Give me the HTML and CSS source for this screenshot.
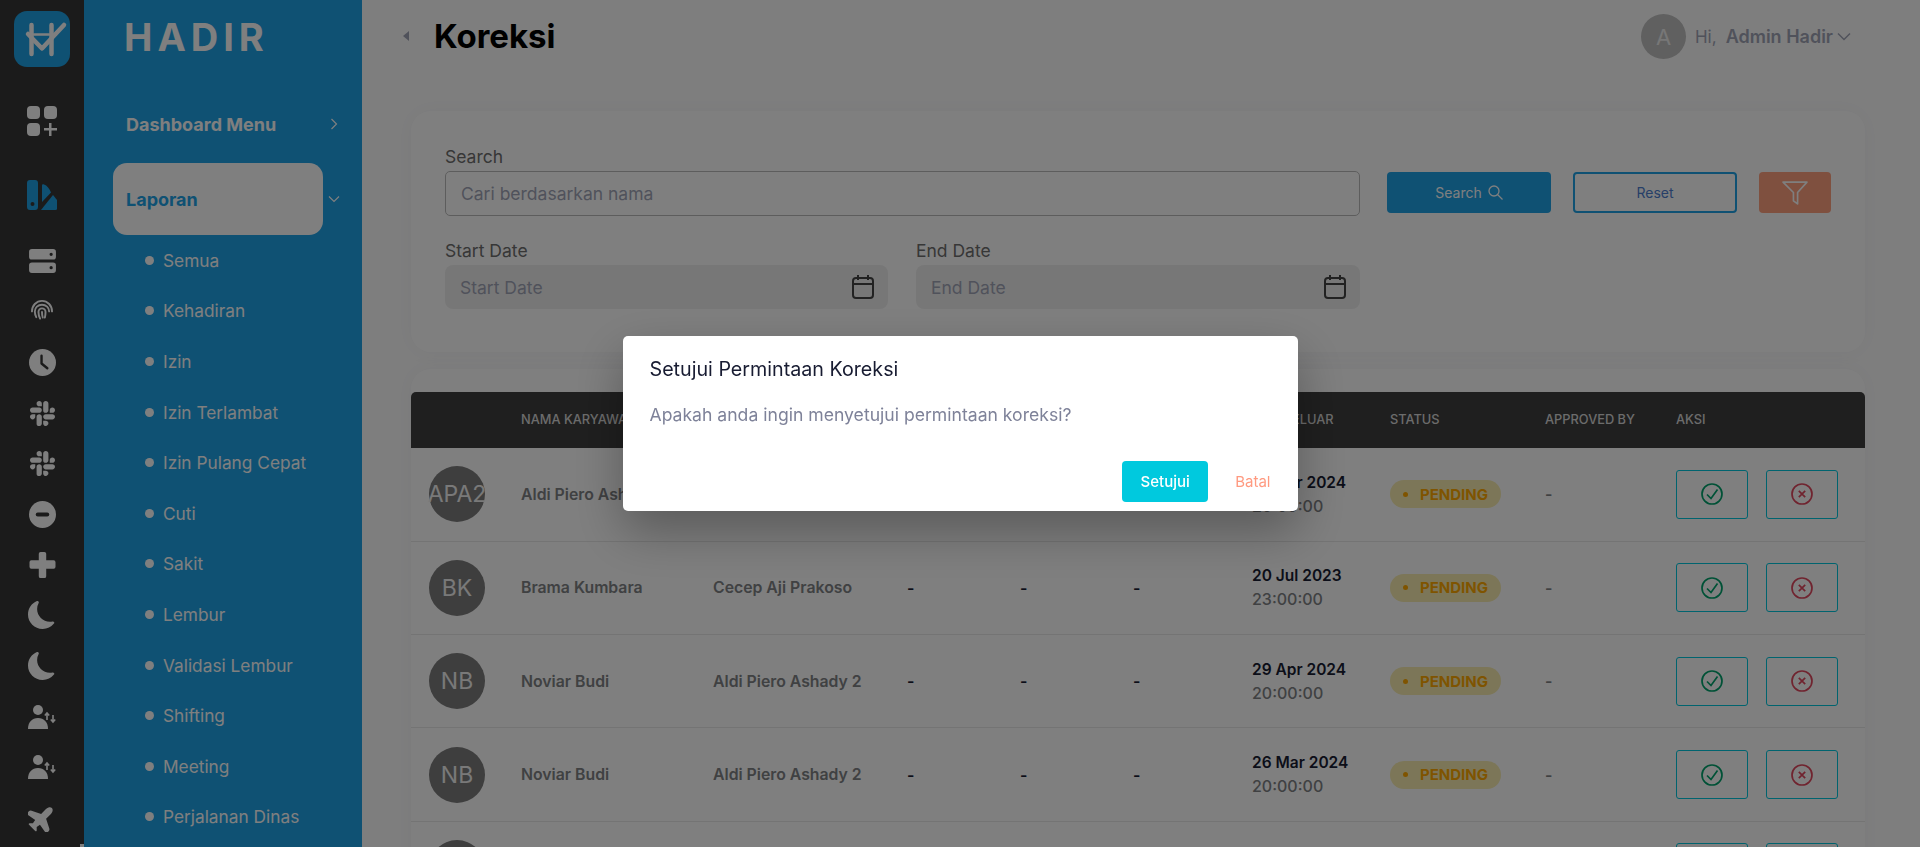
FILE: index.html
```html
<!DOCTYPE html>
<html lang="id">
<head>
  <meta charset="UTF-8">
  <title>Koreksi</title>
  <link rel="stylesheet" href="styles.css">
</head>
<body>

  <div class="rail">
    <div class="rail-logo">
      <svg width="56" height="56" viewBox="0 0 56 56" fill="none" stroke="#fff" stroke-linecap="round" stroke-linejoin="round">
        <path d="M17.500 14v29M37.500 14v29" stroke-width="4.500"/>
        <path d="M20 23.500h15" stroke-width="2.500"/>
        <path d="M14 23l14 14.500L50 14" stroke-width="4.500"/>
      </svg>
    </div>
    <div class="rail-icon first">
      <svg width="30" height="30" viewBox="0 0 30 30" fill="#fff"><rect width="13" height="13" rx="4"/><rect x="17" width="13" height="13" rx="4"/><rect y="17" width="13" height="13" rx="4"/><path d="M22 17h2.500v5H30v2.500h-5.500V30H22v-5.500h-5V22h5z"/></svg>
    </div>
    <div class="rail-icon active">
      <svg width="30" height="30" viewBox="0 0 30 30" fill="#1ea2e6"><path d="M3 0h5a3 3 0 0 1 3 3v24a3 3 0 0 1-3 3H3a3 3 0 0 1-3-3V3a3 3 0 0 1 3-3zm2.500 22a2 2 0 1 0 0 4 2 2 0 0 0 0-4z" fill-rule="evenodd"/><path d="M15 5.500c0-1 1-1.500 2-1 3 1 5.500 4 7 8L15 22z"/><path d="M26 15l4 5v8.500a1.500 1.500 0 0 1-1.500 1.500H14z"/></svg>
    </div>
    <div class="rail-icon server">
      <svg width="27" height="24" viewBox="0 0 28 25" fill="#fff"><path d="M3 0h22a3 3 0 0 1 3 3v5a3 3 0 0 1-3 3H3a3 3 0 0 1-3-3V3a3 3 0 0 1 3-3zm20 3.800a1.700 1.700 0 1 0 0 3.400 1.700 1.700 0 0 0 0-3.400zM3 14h22a3 3 0 0 1 3 3v5a3 3 0 0 1-3 3H3a3 3 0 0 1-3-3v-5a3 3 0 0 1 3-3zm20 3.800a1.700 1.700 0 1 0 0 3.400 1.700 1.700 0 0 0 0-3.400z" fill-rule="evenodd"/></svg>
    </div>
    <div class="rail-icon finger">
      <svg width="24" height="21" viewBox="0 0 24 22" fill="none" stroke="#fff" stroke-width="2" stroke-linecap="round"><path d="M1.500 13c0-6 4.500-11 10.500-11s10.500 5 10.500 11"/><path d="M6 19c-1-2-1.500-4-1.500-6 0-4 3.300-7 7.500-7s7.500 3 7.500 7"/><path d="M10 20.500c-1-2-1.700-4.500-1.700-7a3.700 3.700 0 0 1 7.400 0c0 2-.2 4-.7 6"/><path d="M12 13.500c0 2 .3 4 .8 6"/></svg>
    </div>
    <div class="rail-icon">
      <svg width="27" height="27" viewBox="0 0 28 28"><circle cx="14" cy="14" r="14" fill="#fff"/><path d="M13 7v8l6 5" fill="none" stroke="#373737" stroke-width="2.500" stroke-linecap="round" stroke-linejoin="round"/></svg>
    </div>
    <div class="rail-icon">
      <svg width="25" height="25" viewBox="0 0 16 16" fill="#fff"><path d="M3.362 10.110c0 .926-.756 1.681-1.681 1.681S0 11.036 0 10.111C0 9.186.756 8.430 1.680 8.430h1.682v1.680zm.846 0c0-.924.756-1.680 1.681-1.680s1.681.756 1.681 1.680v4.210c0 .924-.756 1.680-1.680 1.680a1.685 1.685 0 0 1-1.682-1.680v-4.210zM5.890 3.362c-.926 0-1.682-.756-1.682-1.681S4.964 0 5.890 0s1.680.756 1.680 1.680v1.682H5.890zm0 .846c.924 0 1.680.756 1.680 1.681S6.814 7.570 5.890 7.570H1.680C.757 7.570 0 6.814 0 5.890c0-.926.756-1.682 1.680-1.682h4.210zm6.749 1.682c0-.926.755-1.682 1.680-1.682.925 0 1.681.756 1.681 1.681s-.756 1.681-1.680 1.681h-1.681V5.890zm-.848 0c0 .924-.755 1.680-1.680 1.680A1.685 1.685 0 0 1 8.430 5.890V1.680C8.430.757 9.186 0 10.110 0c.926 0 1.681.756 1.681 1.680v4.210zm-1.681 6.748c.926 0 1.682.756 1.682 1.681S11.036 16 10.110 16s-1.681-.756-1.681-1.680v-1.682h1.680zm0-.847c-.924 0-1.680-.755-1.680-1.680 0-.925.756-1.681 1.680-1.681h4.210c.924 0 1.680.756 1.680 1.680 0 .926-.756 1.681-1.680 1.681h-4.210z"/></svg>
    </div>
    <div class="rail-icon">
      <svg width="25" height="25" viewBox="0 0 16 16" fill="#fff"><path d="M3.362 10.110c0 .926-.756 1.681-1.681 1.681S0 11.036 0 10.111C0 9.186.756 8.430 1.680 8.430h1.682v1.680zm.846 0c0-.924.756-1.680 1.681-1.680s1.681.756 1.681 1.680v4.210c0 .924-.756 1.680-1.680 1.680a1.685 1.685 0 0 1-1.682-1.680v-4.210zM5.890 3.362c-.926 0-1.682-.756-1.682-1.681S4.964 0 5.890 0s1.680.756 1.680 1.680v1.682H5.890zm0 .846c.924 0 1.680.756 1.680 1.681S6.814 7.570 5.890 7.570H1.680C.757 7.570 0 6.814 0 5.890c0-.926.756-1.682 1.680-1.682h4.210zm6.749 1.682c0-.926.755-1.682 1.680-1.682.925 0 1.681.756 1.681 1.681s-.756 1.681-1.680 1.681h-1.681V5.890zm-.848 0c0 .924-.755 1.680-1.680 1.680A1.685 1.685 0 0 1 8.430 5.890V1.680C8.430.757 9.186 0 10.110 0c.926 0 1.681.756 1.681 1.680v4.210zm-1.681 6.748c.926 0 1.682.756 1.682 1.681S11.036 16 10.110 16s-1.681-.756-1.681-1.680v-1.682h1.680zm0-.847c-.924 0-1.680-.755-1.680-1.680 0-.925.756-1.681 1.680-1.681h4.210c.924 0 1.680.756 1.680 1.680 0 .926-.756 1.681-1.680 1.681h-4.210z"/></svg>
    </div>
    <div class="rail-icon">
      <svg width="27" height="27" viewBox="0 0 28 28"><circle cx="14" cy="14" r="14" fill="#fff"/><rect x="7" y="12" width="14" height="4" rx="2" fill="#373737"/></svg>
    </div>
    <div class="rail-icon">
      <svg width="27" height="26" viewBox="0 0 28 28" fill="#fff"><path d="M10 2a2 2 0 0 1 2-2h4a2 2 0 0 1 2 2v7h8a2 2 0 0 1 2 2v5a2 2 0 0 1-2 2h-8v8a2 2 0 0 1-2 2h-4a2 2 0 0 1-2-2v-8H2a2 2 0 0 1-2-2v-5a2 2 0 0 1 2-2h8z"/></svg>
    </div>
    <div class="rail-icon">
      <svg width="28" height="28" viewBox="0 0 16 16" fill="#fff"><path d="M6 .278a.768.768 0 0 1 .080.858 7.208 7.208 0 0 0-.878 3.460c0 4.021 3.278 7.277 7.318 7.277.527 0 1.040-.055 1.533-.160a.787.787 0 0 1 .810.316.733.733 0 0 1-.031.893A8.349 8.349 0 0 1 8.344 16C3.734 16 0 12.286 0 7.710 0 4.266 2.114 1.312 5.124.060A.752.752 0 0 1 6 .278z"/></svg>
    </div>
    <div class="rail-icon">
      <svg width="28" height="28" viewBox="0 0 16 16" fill="#fff"><path d="M6 .278a.768.768 0 0 1 .080.858 7.208 7.208 0 0 0-.878 3.460c0 4.021 3.278 7.277 7.318 7.277.527 0 1.040-.055 1.533-.160a.787.787 0 0 1 .810.316.733.733 0 0 1-.031.893A8.349 8.349 0 0 1 8.344 16C3.734 16 0 12.286 0 7.710 0 4.266 2.114 1.312 5.124.060A.752.752 0 0 1 6 .278z"/></svg>
    </div>
    <div class="rail-icon">
      <svg width="28" height="24" viewBox="0 0 28 24" fill="#fff"><circle cx="10" cy="5" r="5"/><path d="M0 24c0-7 4-11 10-11s10 4 10 11z"/><path d="M19 15V8m-2.200 2.500L19 8l2.200 2.500M25 10v7m-2.200-2.500L25 17l2.200-2.500" fill="none" stroke="#fff" stroke-width="1.600"/></svg>
    </div>
    <div class="rail-icon">
      <svg width="28" height="24" viewBox="0 0 28 24" fill="#fff"><circle cx="10" cy="5" r="5"/><path d="M0 24c0-7 4-11 10-11s10 4 10 11z"/><path d="M19 15V8m-2.200 2.500L19 8l2.200 2.500M25 10v7m-2.200-2.500L25 17l2.200-2.500" fill="none" stroke="#fff" stroke-width="1.600"/></svg>
    </div>
    <div class="rail-icon">
      <svg width="28" height="28" viewBox="0 0 16 16" fill="#fff"><path transform="rotate(45 8 8)" d="M6.428 1.151C6.708.591 7.213 0 8 0s1.292.592 1.572 1.151C9.861 1.730 10 2.431 10 3v3.691l5.170 2.585a1.500 1.500 0 0 1 .830 1.342V12a.500.500 0 0 1-.582.493l-5.507-.918-.375 2.253 1.318 1.318A.500.500 0 0 1 10.500 16h-5a.500.500 0 0 1-.354-.854l1.319-1.318-.376-2.253-5.507.918A.500.500 0 0 1 0 12v-1.382a1.500 1.500 0 0 1 .830-1.342L6 6.691V3c0-.568.140-1.271.428-1.849z"/></svg>
    </div>
  </div>

  <div class="sidebar">
    <div class="brand">HADIR</div>
    <div class="menu-head">
      <span>Dashboard Menu</span>
      <svg width="8" height="12" viewBox="0 0 8 12" fill="none" stroke="#fff" stroke-width="1.200"><path d="M1.500 1l5 5-5 5"/></svg>
    </div>
    <div class="menu-open">
      <div class="menu-pill">Laporan</div>
      <svg width="12" height="8" viewBox="0 0 12 8" fill="none" stroke="#fff" stroke-width="1.200"><path d="M1 1.500l5 5 5-5"/></svg>
    </div>
    <ul class="submenu">
      <li>Semua</li>
      <li>Kehadiran</li>
      <li>Izin</li>
      <li>Izin Terlambat</li>
      <li>Izin Pulang Cepat</li>
      <li>Cuti</li>
      <li>Sakit</li>
      <li>Lembur</li>
      <li>Validasi Lembur</li>
      <li>Shifting</li>
      <li>Meeting</li>
      <li>Perjalanan Dinas</li>
    </ul>
  </div>

  <div class="main">
    <div class="topbar">
      <div class="page-title">
        <span class="back-arrow"></span>
        <h1>Koreksi</h1>
      </div>
      <div class="user-box">
        <div class="user-avatar">A</div>
        <span class="hi">Hi,</span>
        <strong>Admin Hadir</strong>
        <svg width="14" height="9" viewBox="0 0 14 9" fill="none" stroke="#a1a5b7" stroke-width="1.500"><path d="M1 1.500l6 6 6-6"/></svg>
      </div>
    </div>

    <div class="card filter-card">
      <div class="filter-fields">
        <div class="field wide">
          <label>Search</label>
          <div class="input outlined">Cari berdasarkan nama</div>
        </div>
        <div class="field">
          <label>Start Date</label>
          <div class="input solid">Start Date
            <svg width="22" height="24" viewBox="0 0 22 24" fill="none" stroke="#444" stroke-width="2"><rect x="1" y="3" width="20" height="20" rx="3"/><path d="M1 9h20M6 0v5M16 0v5"/></svg>
          </div>
        </div>
        <div class="field">
          <label>End Date</label>
          <div class="input solid">End Date
            <svg width="22" height="24" viewBox="0 0 22 24" fill="none" stroke="#444" stroke-width="2"><rect x="1" y="3" width="20" height="20" rx="3"/><path d="M1 9h20M6 0v5M16 0v5"/></svg>
          </div>
        </div>
      </div>
      <div class="filter-actions">
        <button class="btn btn-search">Search
          <svg width="15" height="15" viewBox="0 0 15 15" fill="none" stroke="#fff" stroke-width="1.300"><circle cx="6" cy="6" r="5"/><path d="M9.500 9.500l5 5"/></svg>
        </button>
        <button class="btn btn-reset">Reset</button>
        <button class="btn btn-filter">
          <svg width="26" height="24" viewBox="0 0 25 23" fill="none" stroke="#fff" stroke-width="1.600" stroke-linejoin="round"><path d="M1 1h23l-9 10v11l-4-3v-8z"/></svg>
        </button>
      </div>
    </div>

    <div class="card table-card">
      <table>
        <thead>
          <tr>
            <th class="c-avatar"></th>
            <th class="c-name">NAMA KARYAWAN</th>
            <th class="c-name2">NAMA ATASAN</th>
            <th class="c-a">TANGGAL</th>
            <th class="c-a">JAM</th>
            <th class="c-b">MASUK</th>
            <th class="c-date">JAM KELUAR</th>
            <th class="c-status">STATUS</th>
            <th class="c-appr">APPROVED BY</th>
            <th class="c-aksi">AKSI</th>
          </tr>
        </thead>
        <tbody id="rows"></tbody>
      </table>
    </div>
  </div>

  <div class="overlay">
    <div class="modal">
      <h2>Setujui Permintaan Koreksi</h2>
      <p>Apakah anda ingin menyetujui permintaan koreksi?</p>
      <div class="modal-actions">
        <button class="btn-ok">Setujui</button>
        <button class="btn-cancel">Batal</button>
      </div>
    </div>
  </div>

  <script>
    const rows = [
      ['APA2', 'Aldi Piero Ashady 2', 'Cecep Aji Prakoso', '29 Apr 2024', '20:00:00'],
      ['BK', 'Brama Kumbara', 'Cecep Aji Prakoso', '20 Jul 2023', '23:00:00'],
      ['NB', 'Noviar Budi', 'Aldi Piero Ashady 2', '29 Apr 2024', '20:00:00'],
      ['NB', 'Noviar Budi', 'Aldi Piero Ashady 2', '26 Mar 2024', '20:00:00'],
      ['NB', 'Noviar Budi', 'Aldi Piero Ashady 2', '26 Mar 2024', '20:00:00']
    ];

    const okIcon = '<svg width="22" height="22" viewBox="0 0 22 22" fill="none" stroke="#00a36c" stroke-width="1.700"><circle cx="11" cy="11" r="10"/><path d="M6 11.500l4 4 6.500-9"/></svg>';
    const noIcon = '<svg width="22" height="22" viewBox="0 0 22 22" fill="none" stroke="#e0485f" stroke-width="1.700"><circle cx="11" cy="11" r="10"/><path d="M7.800 7.800l6.400 6.400M14.200 7.800l-6.400 6.400"/></svg>';

    document.getElementById('rows').innerHTML = rows.map(r => `
      <tr>
        <td><div class="avatar">${r[0]}</div></td>
        <td class="name">${r[1]}</td>
        <td class="name">${r[2]}</td>
        <td class="dash">-</td>
        <td class="dash">-</td>
        <td class="dash">-</td>
        <td><div class="date">${r[3]}</div><div class="time">${r[4]}</div></td>
        <td><span class="pill"><i></i>PENDING</span></td>
        <td class="dash muted">-</td>
        <td><div class="aksi"><button>${okIcon}</button><button>${noIcon}</button></div></td>
      </tr>`).join('');
  </script>

</body>
</html>
```

FILE: styles.css
```css
* {
  box-sizing: border-box;
}

body {
  margin: 0;
  height: 100vh;
  overflow: hidden;
  display: flex;
  font-family: Inter, "Liberation Sans", sans-serif;
  background-color: #fdfdfd;
  color: #181c32;
}

/* left icon rail */
.rail {
  width: 84px;
  flex-shrink: 0;
  background-color: #373737;
  padding-top: 11px;
  display: flex;
  flex-direction: column;
  align-items: center;
  position: relative;
}

/* scrollbar stub at the bottom of the rail */
.rail::after {
  content: "";
  position: absolute;
  right: 0;
  bottom: 0;
  width: 4px;
  height: 3px;
  background-color: #fff;
}

.rail-logo {
  width: 56px;
  height: 56px;
  flex-shrink: 0;
  border-radius: 13px;
  background-color: #1ea2e6;
}

.rail-icon {
  height: 50.600px;
  flex-shrink: 0;
  display: flex;
  align-items: center;
  justify-content: center;
}

.rail-icon.first {
  height: 30px;
  margin-top: 39px;
}

.rail-icon.active {
  height: 30px;
  margin-top: 44px;
}

.rail-icon.server {
  margin-top: 26px;
}

.rail-icon.finger svg {
  margin-bottom: 4px;
}

/* blue menu */
.sidebar {
  width: 278px;
  flex-shrink: 0;
  background-color: #1ea2e6;
  color: #fff;
}

.brand {
  font-size: 38px;
  font-weight: 700;
  letter-spacing: 5px;
  line-height: 48px;
  padding: 13px 0 0 40px;
  height: 100px;
}

.menu-head {
  display: flex;
  justify-content: space-between;
  align-items: center;
  padding: 0 24px 0 42px;
  height: 48px;
  font-size: 18px;
  font-weight: 700;
}

.menu-open {
  display: flex;
  align-items: center;
  justify-content: space-between;
  padding: 0 22px 0 29px;
  margin-top: 15px;
}

.menu-pill {
  width: 210px;
  height: 72px;
  border-radius: 14px;
  background-color: #fff;
  color: #1ea2e6;
  font-size: 18px;
  font-weight: 700;
  display: flex;
  align-items: center;
  padding-left: 13px;
}

.submenu {
  list-style: none;
  margin: 0;
  padding: 0 0 0 95px;
}

.submenu li {
  height: 50.600px;
  display: flex;
  align-items: center;
  font-size: 17.300px;
}

.submenu li::before {
  content: "";
  width: 9px;
  height: 9px;
  border-radius: 50%;
  background-color: #fff;
  margin-left: -34px;
  margin-right: 9px;
}

/* main column */
.main {
  flex: 1;
  min-width: 0;
  padding: 0 55px 0 49px;
}

.topbar {
  height: 111px;
  padding-top: 14px;
  display: flex;
  justify-content: space-between;
  align-items: flex-start;
}

.page-title {
  display: flex;
  align-items: center;
  height: 43px;
  margin-left: -8px;
}

.back-arrow {
  width: 0;
  height: 0;
  border-top: 5px solid transparent;
  border-bottom: 5px solid transparent;
  border-right: 6px solid #a1a5b7;
  margin-right: 25px;
}

h1 {
  margin: 0;
  font-size: 33px;
  font-weight: 700;
  color: #000;
}

.user-box {
  display: flex;
  align-items: center;
  height: 45px;
  margin-right: 14px;
  font-size: 18px;
  color: #a1a5b7;
}

.user-box strong {
  font-weight: 600;
}

.user-avatar {
  width: 45px;
  height: 45px;
  border-radius: 50%;
  background-color: #c0c0c0;
  color: #eee;
  font-size: 22px;
  display: flex;
  align-items: center;
  justify-content: center;
  margin-right: 9px;
}

.hi {
  font-size: 17px;
  margin-right: 9px;
}

.user-box svg {
  margin-left: 4px;
}

.card {
  background-color: #fff;
  border-radius: 20px;
  box-shadow: 0 0 20px rgba(76, 87, 125, 0.05);
}

.filter-card {
  height: 241px;
  padding: 36px 34px 0;
  display: flex;
}

.filter-fields {
  width: 915px;
  display: grid;
  grid-template-columns: 443px 444px;
  column-gap: 28px;
  row-gap: 25px;
  align-content: start;
}

.field.wide {
  grid-column: 1 / 3;
}

.field label {
  display: block;
  font-size: 17.500px;
  line-height: 20px;
  margin-bottom: 4px;
  color: #6e6e6e;
}

.input {
  height: 45px;
  border-radius: 5px;
  padding: 0 15px;
  font-size: 17.500px;
  color: #a1a5b7;
  display: flex;
  align-items: center;
  justify-content: space-between;
}

.input.outlined {
  border: 1px solid #bbb;
}

.input.solid {
  background-color: #efefef;
  border-radius: 8px;
  height: 44px;
  padding-right: 14px;
}

.filter-actions {
  margin: 25px 0 0 27px;
  display: flex;
  gap: 22px;
  align-items: flex-start;
}

.btn {
  height: 41px;
  width: 164px;
  border-radius: 4px;
  border: none;
  font-family: inherit;
  font-size: 14px;
  display: flex;
  align-items: center;
  justify-content: center;
  gap: 6px;
}

.btn-search {
  background-color: #1ea2e6;
  color: #fff;
}

.btn-reset {
  background-color: #fff;
  border: 2px solid #1ea2e6;
  color: #4e7fd0;
}

.btn-filter {
  width: 72px;
  background-color: #ffa07f;
}

.table-card {
  margin-top: 17px;
  padding: 23px 0 0;
}

table {
  width: 100%;
  border-collapse: collapse;
  table-layout: fixed;
}

th {
  height: 56px;
  background-color: #3f3f3f;
  color: #d8d8d8;
  font-size: 12.800px;
  font-weight: 500;
  text-align: left;
  padding: 0 0 2px;
}

.c-avatar { width: 110px; }
.c-name { width: 192px; }
.c-name2 { width: 194px; }
.c-a { width: 113px; }
.c-b { width: 119px; }
.c-date { width: 138px; }
.c-status { width: 155px; }
.c-appr { width: 131px; }

th:first-child {
  border-top-left-radius: 5px;
}

th:last-child {
  border-top-right-radius: 5px;
}

td {
  height: 93.300px;
  padding: 0;
  border-bottom: 1px solid #e8e8e8;
}

.avatar {
  width: 56px;
  height: 56px;
  border-radius: 50%;
  margin-left: 18px;
  background-color: #7c7c7c;
  color: #f2f2f2;
  font-size: 23px;
  display: flex;
  align-items: center;
  justify-content: center;
}

.name {
  font-size: 15.800px;
  font-weight: 600;
  color: #808285;
}

.dash {
  font-size: 16px;
  font-weight: 600;
  color: #181c32;
}

.dash.muted {
  color: #808285;
}

.date {
  font-size: 15.500px;
  font-weight: 600;
  color: #181c32;
  margin-bottom: 4px;
}

.time {
  font-size: 16px;
  font-weight: 500;
  color: #808285;
}

.pill {
  display: inline-flex;
  align-items: center;
  width: 111px;
  height: 28px;
  border-radius: 14px;
  background-color: #f8edb0;
  color: #ffa800;
  font-size: 15px;
  font-weight: 700;
  padding-left: 13px;
}

.pill i {
  width: 5px;
  height: 5px;
  border-radius: 50%;
  background-color: #ffa800;
  margin-right: 12px;
}

.aksi {
  display: flex;
  gap: 18px;
}

.aksi button {
  width: 72px;
  height: 49px;
  border: 1px solid #00c9de;
  border-radius: 3px;
  background-color: #fff;
  padding: 0;
  display: flex;
  align-items: center;
  justify-content: center;
}

/* confirm dialog */
.overlay {
  position: fixed;
  inset: 0;
  background-color: rgba(0, 0, 0, 0.5);
  display: flex;
  align-items: center;
  justify-content: center;
}

.modal {
  width: 675px;
  height: 175px;
  background-color: #fff;
  border-radius: 5px;
  padding: 21px 27px 0 27px;
  box-shadow: 0 20px 50px rgba(0, 0, 0, 0.3);
}

.modal h2 {
  margin: 0;
  font-size: 19.700px;
  line-height: 24px;
  font-weight: 400;
  color: #181c32;
}

.modal p {
  margin: 23px 0 0;
  font-size: 17.600px;
  line-height: 22px;
  color: #7e8299;
}

.modal-actions {
  display: flex;
  justify-content: flex-end;
  align-items: center;
  margin-top: 35px;
}

.btn-ok {
  width: 86px;
  height: 41px;
  border: none;
  border-radius: 4px;
  background-color: #00c9de;
  color: #fff;
  font-family: inherit;
  font-size: 15px;
  font-weight: 500;
}

.btn-cancel {
  border: none;
  background: none;
  color: #ff9a80;
  font-family: inherit;
  font-size: 15px;
  padding: 0;
  margin-left: 27px;
}
```
